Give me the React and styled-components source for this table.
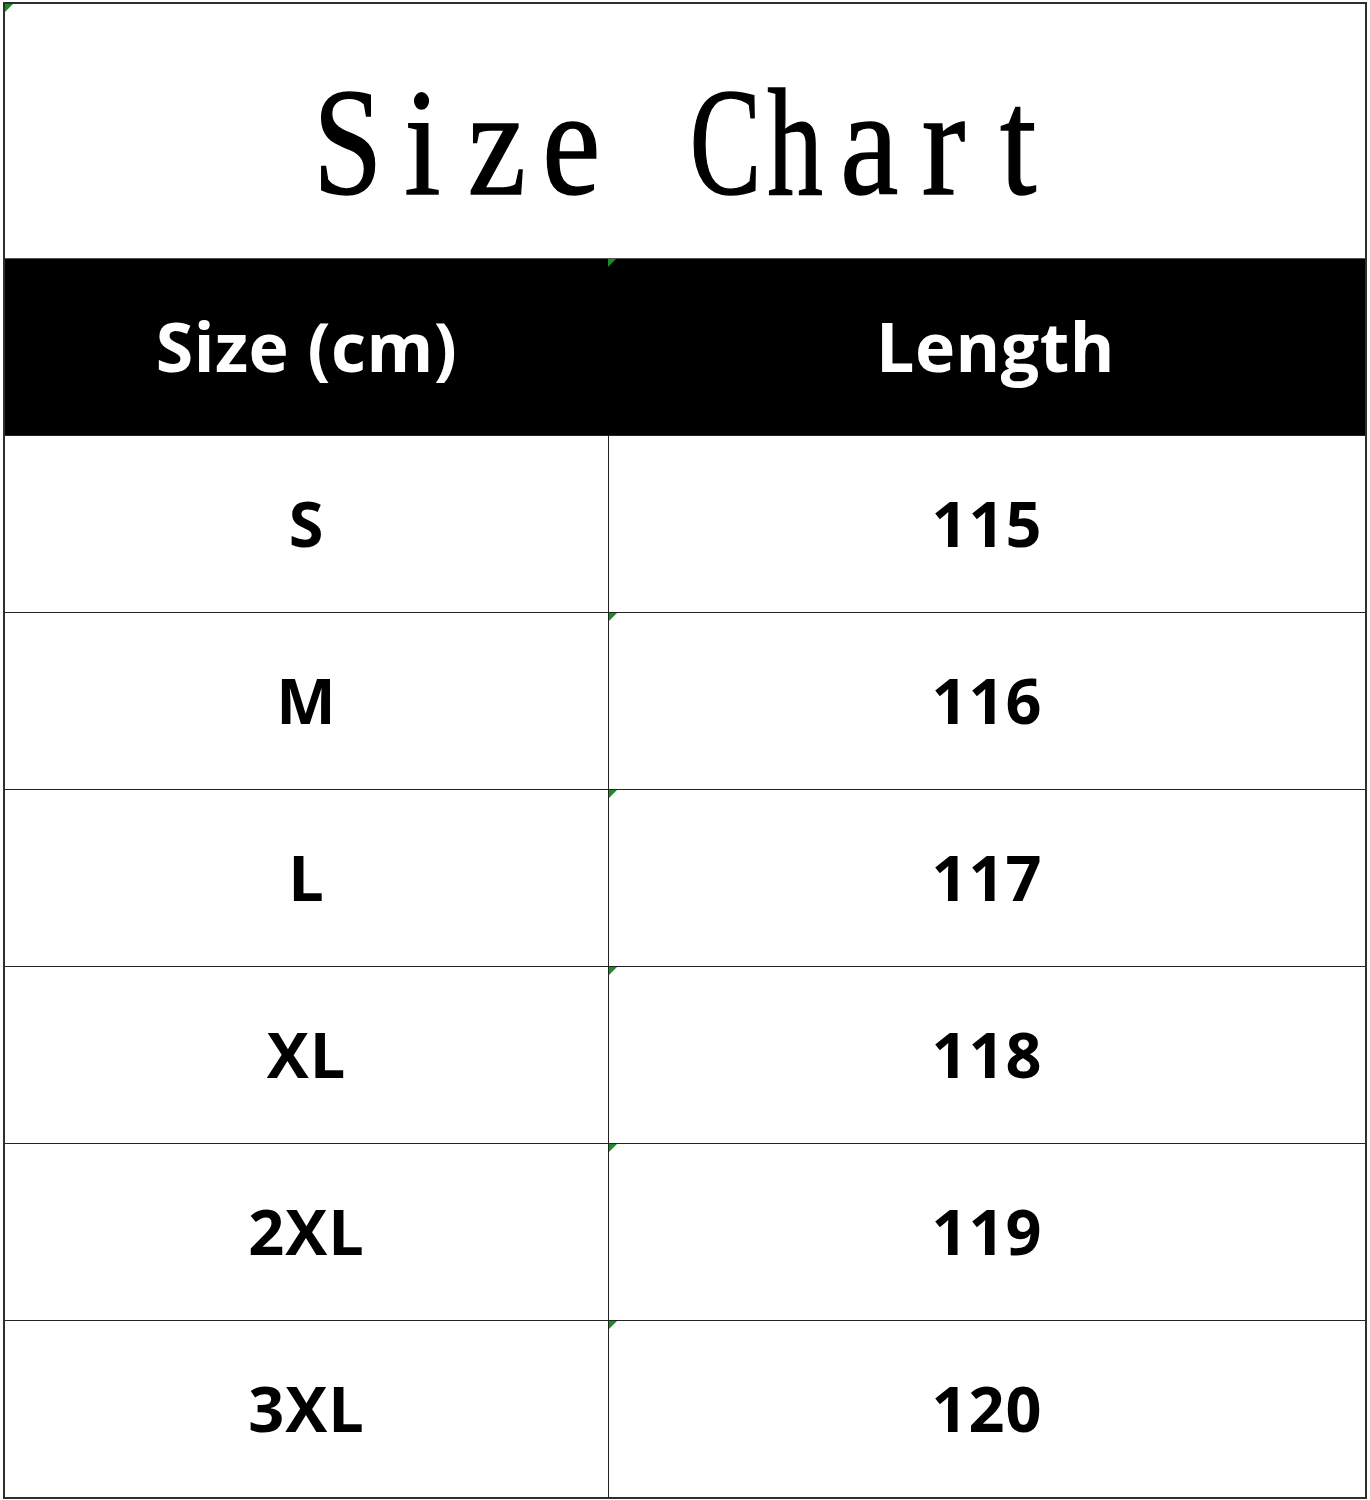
import React from "react";
import styled, { createGlobalStyle } from "styled-components";

const Global = createGlobalStyle`
  html, body { margin: 0; padding: 0; background: #fff; }
  body { font-family: "Open Sans", "Noto Sans", sans-serif; }
`;

const Page = styled.div`
  padding: 2px 0 0 3px;
  width: 1370px;
  box-sizing: border-box;
`;

const Table = styled.div`
  width: 1364px;
  box-sizing: border-box;
  border: 2px solid #2e2e2e;
  display: flex;
  flex-direction: column;
`;

const TitleCell = styled.div`
  position: relative;
  height: 255px;
  display: flex;
  align-items: center;
  justify-content: center;
  border-bottom: 1px solid #555;
  padding-top: 24px;
  box-sizing: border-box;
`;

const Title = styled.h1`
  margin: 0;
  font-family: "Liberation Serif", "Times New Roman", serif;
  font-weight: normal;
  font-size: 152px;
  line-height: 1;
  color: #000;
  white-space: pre;
  display: flex;
  transform: scale(0.86, 1);
  margin-left: -4px;
  -webkit-text-stroke: 1.5px #000;
`;

const Glyph = styled.span`
  display: inline-block;
  width: 86.6px;
  text-align: center;
  transform: scaleX(${(p) => p.$sx || 1});
`;

const Row = styled.div`
  display: grid;
  grid-template-columns: 603px 1fr;
  height: ${(p) => p.$h}px;
  background: ${(p) => (p.$head ? "#000" : "#fff")};
  border-bottom: ${(p) => (p.$last ? "none" : "1px solid #222")};
  box-sizing: border-box;
`;

const Cell = styled.div`
  position: relative;
  display: flex;
  align-items: center;
  justify-content: center;
  font-weight: 700;
  font-size: ${(p) => (p.$head ? 68 : 63)}px;
  color: ${(p) => (p.$head ? "#fff" : "#000")};
  border-left: ${(p) => (p.$divider ? "1px solid #222" : "none")};
  padding-left: ${(p) => p.$shift || 0}px;
  padding-bottom: 4px;
  box-sizing: border-box;
  letter-spacing: ${(p) => (p.$head ? 0.5 : 1)}px;
`;

const Marker = styled.span`
  position: absolute;
  top: 0;
  left: 0;
  width: 0;
  height: 0;
  border-top: 8px solid #1f8a2a;
  border-right: 8px solid transparent;
`;

const rows = [
  ["S", "115", false],
  ["M", "116", true],
  ["L", "117", true],
  ["XL", "118", true],
  ["2XL", "119", true],
  ["3XL", "120", true],
];

const squeeze = { C: 0.82, h: 0.85, S: 0.95 };

export default function App() {
  return (
    <>
      <Global />
      <Page>
        <Table>
          <TitleCell>
            <Marker />
            <Title>
              {"Size Chart".split("").map((c, i) => (
                <Glyph key={i} $sx={squeeze[c]}>
                  {c === " " ? "\u00a0" : c}
                </Glyph>
              ))}
            </Title>
          </TitleCell>
          <Row $head $h={177}>
            <Cell $head>Size (cm)</Cell>
            <Cell $head $shift={18}>
              <Marker />
              Length
            </Cell>
          </Row>
          {rows.map(([s, l, m], i) => (
            <Row key={s} $h={i === rows.length - 1 ? 176 : 177} $last={i === rows.length - 1}>
              <Cell>{s}</Cell>
              <Cell $divider>
                {m && <Marker />}
                {l}
              </Cell>
            </Row>
          ))}
        </Table>
      </Page>
    </>
  );
}
